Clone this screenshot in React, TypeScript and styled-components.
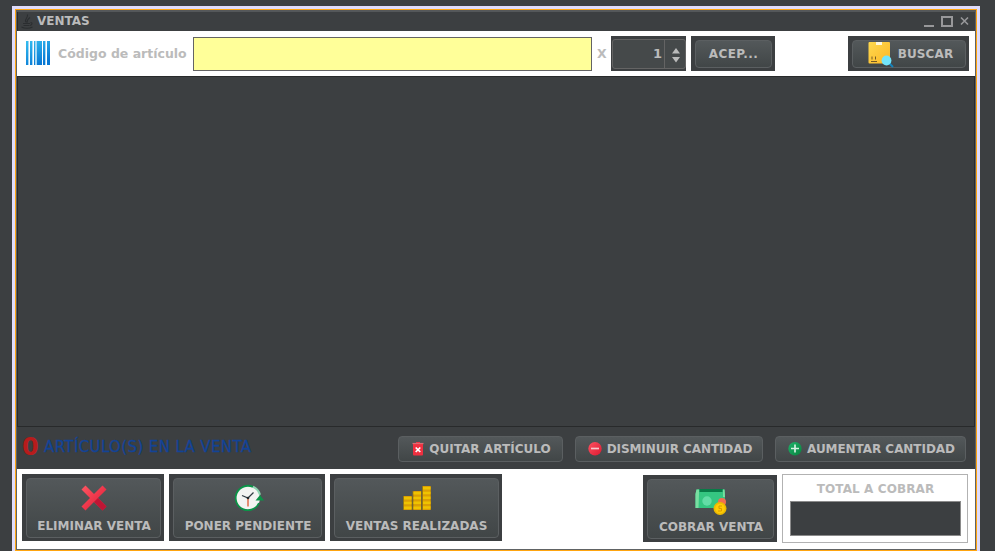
import React from 'react';
import styled, { createGlobalStyle } from 'styled-components';

const Global = createGlobalStyle`
  * { box-sizing: border-box; }
  html, body { margin: 0; height: 551px; overflow: hidden; background: #3c3f41; }
  body { font: bold 12px/16px "DejaVu Sans", sans-serif; color: #bbb; }
  svg { display: block; flex: none; overflow: visible; }
`;

const Desktop = styled.div`
  height: 551px;
  padding: 6px 15px 0 12px;
  background: #3c3f41;
`;
const Frame = styled.div`
  height: 545px;
  border: 3px solid #dfdcfb;
  border-bottom: 0;
`;
const Highlight = styled.div`
  height: 542px;
  border: 1px solid #ffa50f;
`;
const Window = styled.main`
  height: 540px;
  display: flex;
  flex-direction: column;
  border: 1px solid #606365;
  border-top: 2px solid #55585a;
  background: #fff;
`;
const TitleBar = styled.header`
  height: 19px;
  flex: none;
  display: flex;
  align-items: center;
  padding: 0 4px 0 3px;
  background: #3c3f41;
  border-left: 1px solid #292b2c;
`;
const Title = styled.span`
  margin-left: 4px;
  flex: 1;
  line-height: 17px;
`;
const Toolbar = styled.section`
  height: 45px;
  flex: none;
  display: flex;
  align-items: flex-start;
  padding: 5px 6px 0 9px;
`;
const BarcodeBox = styled.div`
  padding-top: 5px;
`;
const Label = styled.label<{ $w: number; $ml: number }>`
  width: ${p => p.$w}px;
  margin: 10px 0 0 ${p => p.$ml}px;
  font-size: 12.5px;
  white-space: nowrap;
  color: #bbb;
`;
const CodeInput = styled.input`
  width: 399px;
  height: 34px;
  margin: 1px 0 0 6px;
  padding: 0 6px;
  border: 1px solid #646464;
  border-radius: 0;
  outline: 0;
  background: #ffff99;
`;
const Spinner = styled.div`
  width: 75px;
  height: 35px;
  padding: 3px 0 2px 1px;
  margin: 0 5px 0 4px;
  background: #3c3f41;
`;
const SpinnerField = styled.div`
  display: flex;
  height: 30px;
  border: 1px solid #646464;
  border-radius: 3px;
  background: #45494a;
`;
const Value = styled.span`
  width: 52px;
  padding: 6px 2px 0 0;
  font-size: 13px;
  text-align: right;
  border-right: 1px solid #646464;
`;
const Arrows = styled.span`
  padding: 8px 0 0 7px;
`;
const Slot = styled.div<{ $w: number; $h: number }>`
  width: ${p => p.$w}px;
  height: ${p => p.$h}px;
  flex: none;
  padding: 4px 3px 3px 4px;
  background: #3c3f41;
`;
const Button = styled.button<{ $w?: number; $stack?: boolean; $spacing?: number; $indent?: number }>`
  width: ${p => (p.$w ? p.$w + 'px' : '100%')};
  height: ${p => (p.$w ? '26px' : '100%')};
  display: flex;
  flex-direction: ${p => (p.$stack ? 'column' : 'row')};
  align-items: center;
  justify-content: ${p => (p.$stack ? 'flex-start' : 'center')};
  gap: 5px;
  padding: ${p => (p.$stack ? '4px' : '0')} 0 0 ${p => p.$indent ?? 0}px;
  border: 1px solid #5b5f61;
  border-radius: 4px;
  background: linear-gradient(#53585a, #414647);
  color: #bbb;
  font: inherit;
  letter-spacing: ${p => p.$spacing ?? 0}px;
  white-space: nowrap;
`;
const Grow = styled.div`
  flex: 1;
`;
const Table = styled.section`
  height: 351px;
  flex: none;
  background: #3c3f41;
  border: 1px solid #282a2b;
`;
const Summary = styled.section`
  height: 42px;
  flex: none;
  display: flex;
  align-items: flex-start;
  padding: 9px 9px 0 5px;
  gap: 12px;
  background: #3c3f41;
`;
const Count = styled.div`
  flex: 1;
  display: flex;
  color: #134396;
  font-size: 15px;
  font-weight: normal;
  letter-spacing: 0.38px;
  line-height: 22px;
  white-space: nowrap;
  -webkit-text-stroke: 0.3px #134396;
`;
const CountNumber = styled.span`
  width: 22px;
  color: #b71c1c;
  font-size: 24px;
  font-weight: bold;
  line-height: 22px;
  -webkit-text-stroke: 0;
`;
const Footer = styled.footer`
  height: 80px;
  display: flex;
  align-items: flex-start;
  padding: 5px 7px 0 5px;
  gap: 5px;
`;
const Lowered = styled.div`
  padding-top: 1px;
`;
const Total = styled.div`
  width: 186px;
  height: 69px;
  padding: 6px 6px 0 7px;
  border: 1px solid #b2b2b2;
  text-align: center;
  letter-spacing: 0.1px;
`;
const TotalField = styled.div`
  height: 35px;
  margin-top: 4px;
  border: 1px solid #8b8b8b;
  background: #3c3f41;
`;
const IconBox = styled.span`
  height: 30px;
  display: flex;
  align-items: center;
`;

const JavaIcon = () => (
  <svg width="12" height="15" viewBox="0 0 12 15" fill="none" stroke="#2b2e30" strokeWidth="1.1">
    <path d="M5.500 8.500C2 6 7.500 4 6.500 0.500M6.500 8.500C5.500 6.500 7 5 9 3.500M2 9.500h7M2.500 11.500h6M9.500 8.500c2.500 0 1.500 2.500-0.500 3M0.500 13c3 1.500 8 1.500 11 0" />
  </svg>
);
const WindowControls = () => (
  <svg width="48" height="14" viewBox="0 0 48 14" fill="none" stroke="#98989a">
    <path d="M1 11h10" strokeWidth="2" />
    <path d="M19 2h10v9H19z" strokeWidth="2" />
    <path d="m38 2.500 7 7m0-7-7 7" strokeWidth="1.600" />
  </svg>
);
const BarcodeIcon = () => (
  <svg width="24" height="24" viewBox="0 0 24 24">
    <defs>
      <linearGradient id="bar" x2="0.5" y2="1">
        <stop stopColor="#35bff0" />
        <stop offset="1" stopColor="#0878d4" />
      </linearGradient>
    </defs>
    <path fill="url(#bar)" d="M0 0h3v24H0zM4 0h3v24H4zM8 0h1v24H8zM11 0h5v24h-5zM17 0h3v24h-3zM21 0h3v24h-3z" />
    <path fill="#a5d7f4" d="M2 0h1v24H2zM6 0h1v24H6zM9 0h2v24H9zM19 0h1v24h-1z" />
  </svg>
);
const ArrowsIcon = () => (
  <svg width="8" height="15" viewBox="0 0 8 15" fill="#bbb">
    <path d="M4 0l4 5.500H0zM0 9h8l-4 5.500z" />
  </svg>
);
const PackageIcon = () => (
  <svg width="25" height="26" viewBox="0 0 25 26">
    <defs>
      <linearGradient id="box" x2="1" y2="1">
        <stop stopColor="#ffd94f" />
        <stop offset="1" stopColor="#fbb726" />
      </linearGradient>
    </defs>
    <rect x="0.500" y="1" width="21.500" height="21.500" rx="1" fill="url(#box)" />
    <path d="M8 1h6v3H8z" fill="#fff8dd" />
    <path d="M3 20.500h6M4 15.500v3M7.500 15.500v3" stroke="#735926" fill="none" />
    <path d="m21 22 4 4" stroke="#1683bb" strokeWidth="2" />
    <circle cx="18.500" cy="19.500" r="4.900" fill="#72e5fb" />
  </svg>
);
const TrashIcon = () => (
  <svg width="12" height="14" viewBox="0 0 12 14">
    <path d="M1 2h10v10.500q0 1-1 1H2q-1 0-1-1z" fill="#ef3040" />
    <path d="M4 0h4v2H4z" fill="#e83345" />
    <path d="M.5 1.500h11" stroke="#d96d74" strokeWidth="1.200" />
    <path d="m3.700 5.500 4.600 4.500m0-4.500-4.600 4.500" stroke="#fff" strokeWidth="1.700" />
  </svg>
);
const CircleIcon = ({ plus }: { plus?: boolean }) => (
  <svg width="14" height="14" viewBox="0 0 14 14">
    <defs>
      <linearGradient id={plus ? 'green' : 'red'} x2="1" y2="1">
        <stop stopColor={plus ? '#20b26a' : '#ff5261'} />
        <stop offset="1" stopColor={plus ? '#08833f' : '#dc1931'} />
      </linearGradient>
    </defs>
    <circle cx="7" cy="6.700" r="6.700" fill={plus ? 'url(#green)' : 'url(#red)'} />
    <path d={plus ? 'M3 6.500h8M7 2.500v8' : 'M3 6.500h8'} stroke={plus ? '#d6f0e2' : '#f9c7cb'} strokeWidth="1.700" />
  </svg>
);
const DeleteIcon = () => (
  <svg width="26" height="26" viewBox="0 0 26 26" strokeWidth="5.600">
    <defs>
      <linearGradient id="cross" gradientUnits="userSpaceOnUse" x1="0" y1="0" x2="26" y2="26">
        <stop stopColor="#ff5763" />
        <stop offset="1" stopColor="#dc1733" />
      </linearGradient>
    </defs>
    <path d="m2.500 2.500 21 21" stroke="url(#cross)" />
    <path d="m14 14 9.500 9.500" stroke="#be1635" />
    <path d="m2.500 23.500 21-21" stroke="url(#cross)" />
  </svg>
);
const ClockIcon = () => (
  <svg width="30" height="28" viewBox="-1 0 30 28">
    <circle cx="14" cy="14" r="12" fill="#f3f4f2" />
    <path d="M19 2.900A12.200 12.200 0 1 0 25 19" fill="none" stroke="#0b9448" strokeWidth="1.800" />
    <path d="M19 2.700q5 2 7 8" fill="none" stroke="#8fd5b2" strokeWidth="2" />
    <path d="M21.500 16.500 26 11l4 5.500z" fill="#0b9448" />
    <path d="M14 14v8.500" stroke="#e58e73" strokeWidth="2" />
    <path d="m8 11.500 6 2.500 5.500-5.500" fill="none" stroke="#303c43" strokeWidth="1.300" />
    <circle cx="14" cy="14" r="1.300" fill="#22282b" />
  </svg>
);
const CoinStack = ({ x, y }: { x: number; y: number }) => (
  <g>
    <path d={`M${x} ${y}h9V25h-9z`} fill="#957714" />
    <path d={`M${x + 1} ${y}h7.500V25h-7.500z`} fill="#dc9f05" />
    <path d={`M${x + 4.75} ${y + 1}V25`} stroke="#efc300" strokeWidth="7.500" strokeDasharray="2.500 2.300" />
  </g>
);
const CoinsIcon = () => (
  <svg width="28" height="26" viewBox="0 0 28 26">
    <CoinStack x={0} y={11} />
    <CoinStack x={9.5} y={6} />
    <CoinStack x={19} y={1} />
  </svg>
);
const CashIcon = () => (
  <svg width="32" height="30" viewBox="0 -4 32 30">
    <path d="M4 1h24v5H4z" fill="#087b47" />
    <path d="M1.500 1.500h3V4h23V1.500h2L30 6v14H.500V6z" fill="#35c681" />
    <path d="M1.500 1.500H4V6l-.5 14h-3V6zM28 1.500h1.500L30 9h-2z" fill="#79dda1" />
    <circle cx="12" cy="13" r="4.700" fill="#63dda6" />
    <circle cx="27" cy="14" r="4" fill="#f16e50" />
    <circle cx="25" cy="20.500" r="6.500" fill="#edb900" />
    <circle cx="25" cy="20.500" r="4.800" fill="#ffcb05" />
    <path d="M27 18h-3v2.500h2.500V23H23" stroke="#d99b00" fill="none" />
  </svg>
);

const actions = [
  { text: 'ELIMINAR VENTA', width: 142, indent: 1, icon: <DeleteIcon /> },
  { text: 'PONER PENDIENTE', width: 156, indent: 1, icon: <ClockIcon /> },
  { text: 'VENTAS REALIZADAS', width: 172, indent: 0, icon: <CoinsIcon /> },
];

export default function App() {
  return (
    <>
      <Global />
      <Desktop><Frame><Highlight><Window>
        <TitleBar><JavaIcon /><Title>VENTAS</Title><WindowControls /></TitleBar>
        <Toolbar>
          <BarcodeBox><BarcodeIcon /></BarcodeBox>
          <Label $w={129} $ml={8}>Código de artículo</Label>
          <CodeInput aria-label="Código de artículo" />
          <Label $w={10} $ml={5}>X</Label>
          <Spinner><SpinnerField><Value>1</Value><Arrows><ArrowsIcon /></Arrows></SpinnerField></Spinner>
          <Slot $w={84} $h={35}><Button $spacing={0.4}>ACEP...</Button></Slot>
          <Grow />
          <Slot $w={121} $h={35}><Button $indent={3} $spacing={0.1}><PackageIcon />BUSCAR</Button></Slot>
        </Toolbar>
        <Table />
        <Summary>
          <Count><CountNumber>0</CountNumber>ARTÍCULO(S) EN LA VENTA</Count>
          <Button $w={165} $indent={2} $spacing={0.05}><TrashIcon />QUITAR ARTÍCULO</Button>
          <Button $w={188} $indent={2} $spacing={-0.08}><CircleIcon />DISMINUIR CANTIDAD</Button>
          <Button $w={191} $indent={2} $spacing={-0.05}><CircleIcon plus />AUMENTAR CANTIDAD</Button>
        </Summary>
        <Footer>
          {actions.map(a => (
            <Slot key={a.text} $w={a.width} $h={67}>
              <Button $stack $indent={a.indent}><IconBox>{a.icon}</IconBox>{a.text}</Button>
            </Slot>
          ))}
          <Grow />
          <Lowered>
            <Slot $w={134} $h={67}><Button $stack $indent={1}><IconBox><CashIcon /></IconBox>COBRAR VENTA</Button></Slot>
          </Lowered>
          <Total>TOTAL A COBRAR<TotalField /></Total>
        </Footer>
      </Window></Highlight></Frame></Desktop>
    </>
  );
}
